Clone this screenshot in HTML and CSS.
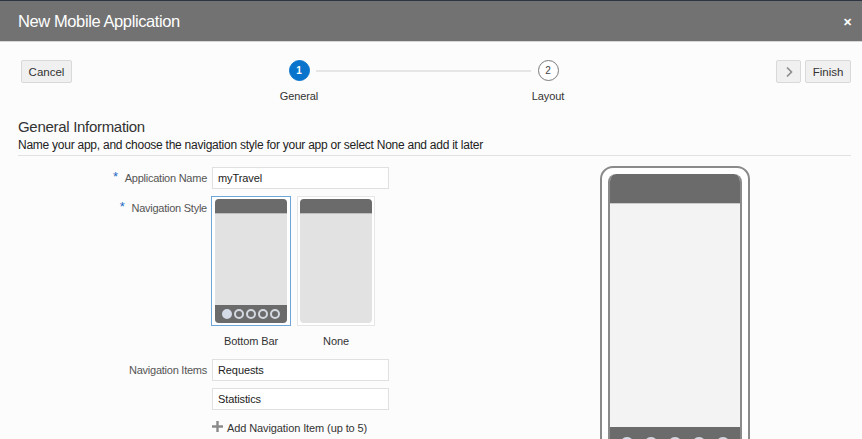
FILE: index.html
```html
<!DOCTYPE html>
<html>
<head>
<meta charset="utf-8">
<link rel="stylesheet" href="styles.css">
</head>
<body>
<div class="dialog">
  <header class="titlebar">
    <h1 class="title">New Mobile Application</h1>
    <span class="close">&#x2715;</span>
  </header>
  <div class="toolbar">
    <button class="btn cancel">Cancel</button>
    <div class="train">
      <div class="step">
        <span class="dot active">1</span>
        <span class="step-label">General</span>
      </div>
      <div class="train-line"></div>
      <div class="step">
        <span class="dot">2</span>
        <span class="step-label">Layout</span>
      </div>
    </div>
    <div class="nav-btns">
      <button class="btn next"><svg width="10" height="12" viewBox="0 0 10 12"><path d="M3 1.5 L7.5 6 L3 10.5" fill="none" stroke="#8a8a8a" stroke-width="1.6"/></svg></button>
      <button class="btn finish">Finish</button>
    </div>
  </div>
  <section class="section-head">
    <h2 class="heading">General Information</h2>
    <p class="subtitle">Name your app, and choose the navigation style for your app or select None and add it later</p>
  </section>
  <div class="content">
    <div class="form">
      <label class="lbl req">Application Name</label>
      <div class="input">myTravel</div>

      <label class="lbl req top">Navigation Style</label>
      <div class="styles">
        <div class="style-opt">
          <div class="card selected">
            <div class="mini">
              <div class="mini-top"></div>
              <div class="mini-body"></div>
              <div class="mini-bottom">
                <span class="c on"></span><span class="c"></span><span class="c"></span><span class="c"></span><span class="c"></span>
              </div>
            </div>
          </div>
          <span class="opt-label">Bottom Bar</span>
        </div>
        <div class="style-opt">
          <div class="card">
            <div class="mini">
              <div class="mini-top"></div>
              <div class="mini-body"></div>
            </div>
          </div>
          <span class="opt-label">None</span>
        </div>
      </div>

      <label class="lbl items">Navigation Items</label>
      <div class="input items">Requests</div>

      <span></span>
      <div class="input">Statistics</div>

      <span></span>
      <div class="add"><svg width="11" height="11" viewBox="0 0 11 11"><path d="M5.5 0 V11 M0 5.5 H11" stroke="#8a8a8a" stroke-width="2.4"/></svg>Add Navigation Item (up to 5)</div>
    </div>
    <div class="preview">
      <div class="phone">
        <div class="screen">
          <div class="screen-top"></div>
          <div class="screen-body"></div>
          <div class="screen-bottom">
            <span class="c on"></span><span class="c"></span><span class="c"></span><span class="c"></span><span class="c"></span>
          </div>
        </div>
      </div>
    </div>
  </div>
</div>
</body>
</html>
```
FILE: styles.css
```css
* { box-sizing: border-box; }
html, body { margin: 0; padding: 0; }
body {
  background: #fcfcfc;
  font-family: "Liberation Sans", Arial, sans-serif;
  color: #333;
  width: 862px;
  height: 439px;
  overflow: hidden;
}
.titlebar {
  height: 42px;
  background: #727272;
  border-top: 1px solid #2c3541;
  border-bottom: 1px solid #d6d6d6;
  display: flex;
  align-items: center;
  justify-content: space-between;
  padding: 0 10px 0 18px;
}
.title {
  margin: 0;
  font-weight: normal;
  font-size: 16.5px;
  color: #fff;
  letter-spacing: -0.4px;
}
.close {
  color: #fff;
  font-size: 11px;
  font-weight: bold;
  margin-top: 2px;
}
.toolbar {
  display: flex;
  align-items: flex-start;
  padding: 18px 11px 0 21px;
  height: 76px;
}
.btn {
  font-family: "Liberation Sans", Arial, sans-serif;
  font-size: 11.5px;
  color: #333;
  background: #f0f0f0;
  border: 1px solid #d9d9d9;
  border-radius: 2px;
  height: 23px;
  padding: 0;
  margin: 0;
}
.cancel { width: 51px; }
.train {
  display: flex;
  align-items: flex-start;
  margin-left: 197px;
}
.step {
  width: 60px;
  display: flex;
  flex-direction: column;
  align-items: center;
}
.dot {
  width: 21px;
  height: 21px;
  border-radius: 50%;
  border: 1.5px solid #7a7a7a;
  background: #fff;
  font-size: 10px;
  color: #444;
  display: flex;
  align-items: center;
  justify-content: center;
}
.dot.active {
  background: #0a74cd;
  border-color: #0a74cd;
  color: #fff;
  font-weight: bold;
}
.step-label {
  font-size: 11px;
  letter-spacing: -0.1px;
  color: #333;
  margin-top: 9px;
}
.train-line {
  width: 215px;
  height: 2px;
  background: #e6e6e6;
  margin: 10px -13px 0;
}
.nav-btns {
  margin-left: auto;
  display: flex;
  gap: 4px;
}
.next {
  width: 25px;
  display: flex;
  align-items: center;
  justify-content: center;
}
.finish { width: 46px; }
.section-head {
  margin: 0 11px 0 18px;
  border-bottom: 1px solid #e2e2e2;
  padding-bottom: 2px;
}
.heading {
  margin: 0;
  font-weight: normal;
  font-size: 15px;
  letter-spacing: -0.3px;
  color: #333;
  line-height: 18px;
}
.subtitle {
  margin: 1px 0 0;
  font-size: 12px;
  letter-spacing: -0.25px;
  color: #222;
  line-height: 16px;
}
.content {
  display: flex;
  align-items: flex-start;
  padding-top: 11px;
}
.form {
  display: grid;
  grid-template-columns: 207px 177px;
  column-gap: 5px;
  row-gap: 7px;
  align-items: center;
}
.lbl {
  display: flex;
  justify-content: flex-end;
  align-items: flex-start;
  font-size: 11px;
  letter-spacing: -0.25px;
  color: #555;
}
.lbl.req::before {
  content: "*";
  color: #1a6bc2;
  font-size: 13px;
  margin-right: 7px;
  margin-top: -3px;
}
.lbl.top { align-self: start; margin-top: 6px; }
.input {
  height: 22px;
  background: #fff;
  border: 1px solid #e0e0e0;
  font-size: 11px;
  letter-spacing: -0.1px;
  color: #222;
  display: flex;
  align-items: center;
  padding-left: 5px;
}
.input.items { margin-top: 5px; }
.lbl.items { margin-top: 5px; }
.styles {
  display: flex;
  gap: 6px;
  margin-left: -1px;
}
.style-opt {
  display: flex;
  flex-direction: column;
  align-items: center;
}
.card {
  width: 80px;
  height: 130px;
  border: 1px solid #e6e6e6;
  background: #fff;
  padding: 2px 3px;
}
.card.selected { border-color: #6ea6d9; }
.style-opt + .style-opt .card { width: 78px; padding: 2px 2px; }
.mini {
  height: 124px;
  border-radius: 4px;
  overflow: hidden;
  background: #e2e2e2;
  display: flex;
  flex-direction: column;
}
.mini-top {
  height: 15px;
  background: #6b6b6b;
  border-bottom: 1px solid #bdbdbd;
}
.mini-body { flex: 1; }
.mini-bottom {
  height: 18px;
  background: #6b6b6b;
  display: flex;
  align-items: center;
  justify-content: center;
  gap: 2px;
}
.c {
  width: 10px;
  height: 10px;
  border-radius: 50%;
  border: 2px solid #d4d9e1;
  background: #6b6b6b;
}
.c.on { background: #d4dbe6; border-color: #d4dbe6; }
.opt-label {
  font-size: 11px;
  letter-spacing: -0.1px;
  color: #333;
  margin-top: 9px;
}
.add {
  font-size: 11px;
  letter-spacing: -0.1px;
  color: #333;
  display: flex;
  align-items: center;
  gap: 4px;
  margin-top: 5px;
}
.add svg { margin-top: -3px; }
.preview {
  margin-left: 211px;
  margin-top: -1px;
}
.phone {
  width: 150px;
  height: 300px;
  border: 2px solid #8a8a8a;
  border-radius: 13px;
  background: #fff;
  padding: 6px 6px 0;
}
.screen {
  height: 300px;
  border: 2px solid #8a8a8a;
  border-top: 0;
  border-radius: 8px 8px 0 0;
  background: #f3f3f3;
  display: flex;
  flex-direction: column;
  overflow: hidden;
}
.screen-top {
  height: 30px;
  background: #6b6b6b;
  border-bottom: 1px solid #c9c9c9;
  margin: 0 -2px;
  border-radius: 8px 8px 0 0;
}
.screen-body { height: 223px; }
.screen-bottom {
  height: 30px;
  background: #6b6b6b;
  display: flex;
  align-items: flex-start;
  justify-content: center;
  gap: 10px;
  padding-top: 10px;
}
.screen-bottom .c { width: 14px; height: 14px; border-width: 2px; }
```
